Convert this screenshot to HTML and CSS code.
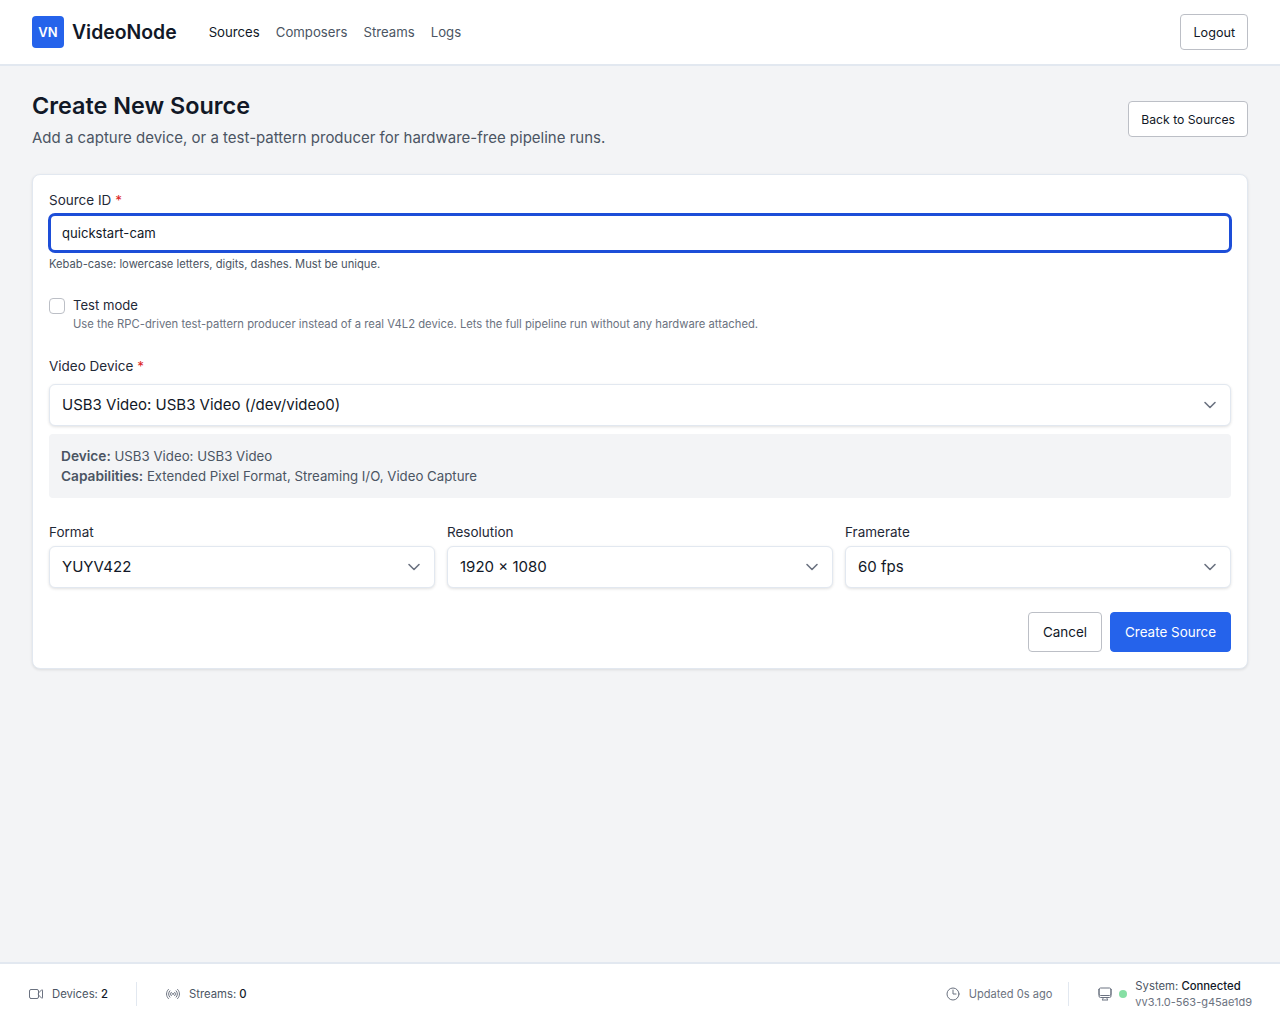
FILE: index.html
```html
<!DOCTYPE html>
<html>
<head>
  <meta name="viewport" content="width=device-width, initial-scale=1.0">
  <title>VideoNode</title>
  <link rel="stylesheet" href="styles.css">
</head>
<body>

  <header class="topbar">
    <div class="logo">VN</div>
    <div class="brand">VideoNode</div>
    <nav class="nav">
      <a class="nav-link active" href="#">Sources</a>
      <a class="nav-link" href="#">Composers</a>
      <a class="nav-link" href="#">Streams</a>
      <a class="nav-link" href="#">Logs</a>
    </nav>
    <button class="btn btn-small">Logout</button>
  </header>

  <main class="content">
    <div class="page-head">
      <div>
        <h1 class="page-title">Create New Source</h1>
        <p class="page-sub">Add a capture device, or a test-pattern producer for hardware-free pipeline runs.</p>
      </div>
      <button class="btn btn-small btn-back">Back to Sources</button>
    </div>

    <form class="card">
      <label class="field-label">Source ID <span class="req">*</span></label>
      <input class="text-input" type="text" value="quickstart-cam">
      <p class="hint">Kebab-case: lowercase letters, digits, dashes. Must be unique.</p>

      <div class="check-row">
        <input class="check" type="checkbox">
        <div>
          <div class="check-title">Test mode</div>
          <div class="check-hint">Use the RPC-driven test-pattern producer instead of a real V4L2 device. Lets the full pipeline run without any hardware attached.</div>
        </div>
      </div>

      <label class="field-label label-device">Video Device <span class="req">*</span></label>
      <div class="select-wrap">
        <select class="select"><option>USB3 Video: USB3 Video (/dev/video0)</option></select>
        <svg class="chevron" viewBox="0 0 20 20" fill="none"><path d="M5 7.5l5 5 5-5" stroke="#6b7280" stroke-width="1.6" stroke-linecap="round" stroke-linejoin="round"/></svg>
      </div>
      <div class="device-info">
        <div><strong>Device:</strong> USB3 Video: USB3 Video</div>
        <div><strong>Capabilities:</strong> Extended Pixel Format, Streaming I/O, Video Capture</div>
      </div>

      <div class="three-col">
        <div>
          <label class="field-label">Format</label>
          <div class="select-wrap">
            <select class="select"><option>YUYV422</option></select>
            <svg class="chevron" viewBox="0 0 20 20" fill="none"><path d="M5 7.5l5 5 5-5" stroke="#6b7280" stroke-width="1.6" stroke-linecap="round" stroke-linejoin="round"/></svg>
          </div>
        </div>
        <div>
          <label class="field-label">Resolution</label>
          <div class="select-wrap">
            <select class="select"><option>1920 × 1080</option></select>
            <svg class="chevron" viewBox="0 0 20 20" fill="none"><path d="M5 7.5l5 5 5-5" stroke="#6b7280" stroke-width="1.6" stroke-linecap="round" stroke-linejoin="round"/></svg>
          </div>
        </div>
        <div>
          <label class="field-label">Framerate</label>
          <div class="select-wrap">
            <select class="select"><option>60 fps</option></select>
            <svg class="chevron" viewBox="0 0 20 20" fill="none"><path d="M5 7.5l5 5 5-5" stroke="#6b7280" stroke-width="1.6" stroke-linecap="round" stroke-linejoin="round"/></svg>
          </div>
        </div>
      </div>

      <div class="actions">
        <button class="btn btn-form" type="button">Cancel</button>
        <button class="btn btn-form btn-primary" type="button">Create Source</button>
      </div>
    </form>
  </main>

  <footer class="statusbar">
    <div class="status-item status-left">
      <svg class="icon" viewBox="0 0 24 24" fill="none" stroke="#6b7280" stroke-width="1.5" stroke-linecap="round" stroke-linejoin="round"><path d="M15.75 10.5l4.72-4.72a.75.75 0 011.28.53v11.38a.75.75 0 01-1.28.53l-4.72-4.72M4.5 18.75h9a2.25 2.25 0 002.25-2.25v-9a2.25 2.25 0 00-2.25-2.25h-9A2.25 2.25 0 002.25 7.5v9a2.25 2.25 0 002.25 2.25z"/></svg>
      <span>Devices: <b>2</b></span>
    </div>
    <div class="divider"></div>
    <div class="status-item status-streams">
      <svg class="icon" viewBox="0 0 24 24" fill="none" stroke="#6b7280" stroke-width="1.5" stroke-linecap="round" stroke-linejoin="round"><path d="M9.348 14.651a3.75 3.75 0 010-5.303m5.304 0a3.75 3.75 0 010 5.303m-7.425 2.122a6.75 6.75 0 010-9.546m9.546 0a6.75 6.75 0 010 9.546M5.106 18.894c-3.808-3.808-3.808-9.98 0-13.789m13.788 0c3.808 3.808 3.808 9.981 0 13.79M12 12h.008v.007H12V12zm.375 0a.375.375 0 11-.75 0 .375.375 0 01.75 0z"/></svg>
      <span>Streams: <b>0</b></span>
    </div>
    <div class="spacer"></div>
    <div class="status-item status-updated">
      <svg class="icon" viewBox="0 0 24 24" fill="none" stroke="#6b7280" stroke-width="1.5" stroke-linecap="round" stroke-linejoin="round"><path d="M12 6v6h4.5m4.5 0a9 9 0 11-18 0 9 9 0 0118 0z"/></svg>
      <span>Updated 0s ago</span>
    </div>
    <div class="divider"></div>
    <div class="status-item status-system">
      <svg class="icon" viewBox="0 0 24 24" fill="none" stroke="#6b7280" stroke-width="1.5" stroke-linecap="round" stroke-linejoin="round"><path d="M9 17.25v1.007a3 3 0 01-.879 2.122L7.5 21h9l-.621-.621A3 3 0 0115 18.257V17.25m6-12V15a2.25 2.25 0 01-2.25 2.25H5.25A2.25 2.25 0 013 15V5.25m18 0A2.25 2.25 0 0018.75 3H5.25A2.25 2.25 0 003 5.25m18 0V12a2.25 2.25 0 01-2.25 2.25H5.25A2.25 2.25 0 013 12V5.25"/></svg>
      <span class="dot"></span>
      <div class="system-text">
        <div>System: <b>Connected</b></div>
        <div class="version">vv3.1.0-563-g45ae1d9</div>
      </div>
    </div>
  </footer>

</body>
</html>
```

FILE: styles.css
```css
* {
  box-sizing: border-box;
}

html, body {
  height: 100%;
}

body {
  margin: 0;
  display: flex;
  flex-direction: column;
  background-color: #f3f4f6;
  color: #111827;
  font-family: Inter, "Noto Sans", sans-serif;
  font-size: 13.1px;
}

.topbar {
  display: flex;
  align-items: center;
  height: 66px;
  padding: 0 32px;
  background-color: #fff;
  border-bottom: 2px solid #e2e8f0;
}

.logo {
  width: 32px;
  height: 32px;
  border-radius: 4px;
  background-color: #2563eb;
  color: #fff;
  font-weight: 600;
  font-size: 13px;
  line-height: 32px;
  text-align: center;
}

.brand {
  margin-left: 8px;
  font-size: 19.4px;
  font-weight: 600;
  color: #111827;
}

.nav {
  display: flex;
  gap: 16px;
  margin-left: 32px;
  flex: 1;
}

.nav-link {
  color: #4b5563;
  text-decoration: none;
  font-size: 13.2px;
}

.nav-link.active {
  color: #111827;
}

.btn {
  background-color: #fff;
  border: 1px solid #bcbfc6;
  border-radius: 4px;
  color: #111827;
  font-family: inherit;
  font-size: 12.6px;
  cursor: pointer;
}

.btn-small {
  height: 36px;
  padding: 0 12px;
}

.btn-back {
  margin-bottom: 2px;
  font-size: 12.2px;
}

.btn-form {
  height: 40px;
  padding: 0 14px;
  font-size: 13.45px;
}

.btn-primary {
  background-color: #2563eb;
  border-color: #2563eb;
  color: #fff;
}

.content {
  flex: 1;
  padding: 24px 32px 0;
}

.page-head {
  display: flex;
  justify-content: space-between;
  align-items: center;
  margin-bottom: 24px;
}

.page-title {
  margin: 0;
  font-size: 23.4px;
  line-height: 32px;
  font-weight: 600;
}

.page-sub {
  margin: 4px 0 0;
  font-size: 15px;
  line-height: 24px;
  color: #4b5563;
}

.card {
  background-color: #fff;
  border: 1px solid #e2e8f0;
  border-radius: 8px;
  box-shadow: 0 1px 3px rgba(0, 0, 0, 0.1);
  padding: 15px 16px 16px;
}

.field-label {
  display: block;
  font-size: 13.5px;
  line-height: 20px;
  margin-bottom: 4px;
  color: #1f2937;
}

.label-device {
  margin-bottom: 8px;
}

.req {
  color: #dc2626;
}

.text-input {
  display: block;
  width: 100%;
  height: 38px;
  padding: 0 11px;
  border: 2px solid #1d4ed8;
  border-radius: 6px;
  box-shadow: 0 0 0 1px #1d4ed8;
  outline: none;
  font-family: inherit;
  font-size: 13.1px;
  color: #111827;
}

.hint {
  margin: 4px 0 0;
  font-size: 11.2px;
  line-height: 16px;
  color: #4b5563;
}

.check-row {
  display: flex;
  gap: 8px;
  margin: 23px 0 24px;
}

.check {
  appearance: none;
  width: 16px;
  height: 16px;
  margin: 3px 0 0;
  background-color: #fff;
  border: 1px solid #bcbfc6;
  border-radius: 4px;
}

.check-title {
  font-size: 13.1px;
  line-height: 20px;
  color: #1f2937;
}

.check-hint {
  margin-top: 1px;
  font-size: 11.25px;
  line-height: 16px;
  color: #6b7280;
}

.select-wrap {
  position: relative;
}

.select {
  display: block;
  width: 100%;
  height: 42px;
  padding: 0 36px 2px 12px;
  appearance: none;
  background-color: #fff;
  border: 1px solid #e2e8f0;
  border-radius: 6px;
  box-shadow: 0 1px 3px rgba(0, 0, 0, 0.12);
  font-family: inherit;
  font-size: 15px;
  color: #111827;
}

.chevron {
  position: absolute;
  top: 11px;
  right: 11px;
  width: 20px;
  height: 20px;
  pointer-events: none;
}

.device-info {
  margin-top: 8px;
  padding: 12px;
  background-color: #f3f4f6;
  border-radius: 4px;
  font-size: 13.25px;
  line-height: 20px;
  color: #4b5563;
}

.device-info strong {
  font-size: 13.7px;
  font-weight: 600;
}

.three-col {
  display: grid;
  grid-template-columns: repeat(3, 1fr);
  gap: 12px;
  margin-top: 24px;
}

.actions {
  display: flex;
  justify-content: flex-end;
  gap: 8px;
  margin-top: 24px;
}

.statusbar {
  display: flex;
  align-items: center;
  height: 62px;
  padding: 0 28px;
  background-color: #fff;
  border-top: 2px solid #e2e8f0;
  font-size: 11.3px;
  color: #4b5563;
}

.statusbar b {
  font-weight: 500;
  color: #111827;
}

.status-item {
  display: flex;
  align-items: center;
}

.icon {
  width: 16px;
  height: 16px;
  margin-right: 8px;
}

.divider {
  width: 1px;
  height: 24px;
  background-color: #e2e8f0;
}

.status-left {
  padding-right: 28px;
}

.status-streams {
  padding-left: 28px;
}

.spacer {
  flex: 1;
}

.status-updated {
  padding-right: 16px;
  font-size: 11.1px;
  color: #6b7280;
}

.status-system {
  padding-left: 28px;
}

.status-system .icon {
  margin-right: 6px;
}

.dot {
  width: 8px;
  height: 8px;
  margin-right: 8px;
  border-radius: 50%;
  background-color: #86dfa4;
}

.system-text {
  line-height: 16px;
}

.version {
  font-size: 11px;
  color: #6b7280;
}
```
